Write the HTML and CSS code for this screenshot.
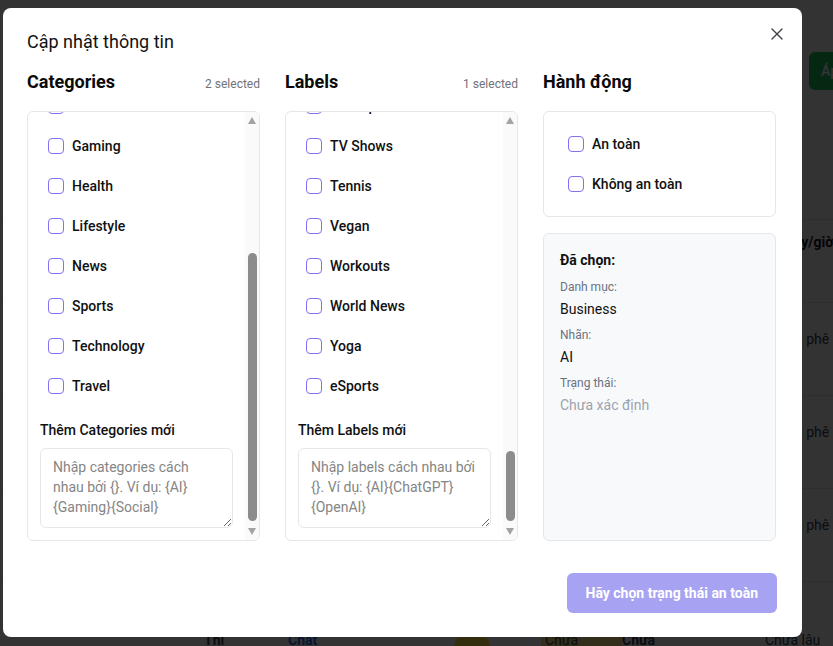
FILE: index.html
```html
<!DOCTYPE html>
<html lang="vi">
<head>
<meta charset="utf-8">
<title>Cập nhật thông tin</title>
<link rel="stylesheet" href="styles.css">
</head>
<body>
<div class="page">
  <div class="toolbar"><button class="btn-apply">Áp dụng</button></div>
  <div class="table">
    <div class="trow thead"><span class="tcell-h">Ngày/giờ</span></div>
    <div class="trow"><span class="tcell">Cà phê</span></div>
    <div class="trow"><span class="tcell">Cà phê</span></div>
    <div class="trow"><span class="tcell">Cà phê</span></div>
    <div class="trow tlast">
      <span class="bc c1">Thi</span>
      <span class="bc c2">Chat</span>
      <span class="bc c3 up">Chưa</span>
      <span class="bc c4"><i class="dot"></i></span>
      <span class="bc c5 badge">Chưa</span>
      <span class="bc c6 strong">Chưa</span>
      <span class="bc c7 up">Chưa</span>
      <span class="bc c8">Chưa lâu</span>
    </div>
  </div>
</div>

<div class="overlay">
  <div class="modal">
    <button class="close" aria-label="Đóng">
      <svg width="12" height="12" viewBox="0 0 12 12"><path d="M1 1 L11 11 M11 1 L1 11" stroke="#3f3f46" stroke-width="1.4" stroke-linecap="round" fill="none"/></svg>
    </button>
    <h2 class="title">Cập nhật thông tin</h2>

    <div class="cols">
      <section class="col">
        <div class="col-head"><h3>Categories</h3><span class="count">2 selected</span></div>
        <div class="listbox">
          <div class="scroll">
            <div class="scroll-inner">
              <ul class="items">
                <li class="item"><span class="cb"></span>Business</li>
                <li class="item"><span class="cb"></span>Education</li>
                <li class="item"><span class="cb"></span>Entertainment</li>
                <li class="item"><span class="cb"></span>Finance</li>
                <li class="item"><span class="cb"></span>Food</li>
                <li class="item"><span class="cb"></span>Gaming</li>
                <li class="item"><span class="cb"></span>Health</li>
                <li class="item"><span class="cb"></span>Lifestyle</li>
                <li class="item"><span class="cb"></span>News</li>
                <li class="item"><span class="cb"></span>Sports</li>
                <li class="item"><span class="cb"></span>Technology</li>
                <li class="item"><span class="cb"></span>Travel</li>
              </ul>
              <div class="add">
                <label class="add-label">Thêm Categories mới</label>
                <textarea class="add-input" placeholder="Nhập categories cách nhau bởi {}. Ví dụ: {AI}{Gaming}{Social}"></textarea>
              </div>
            </div>
          </div>
          <div class="sbar">
            <span class="arr-up"></span>
            <div class="track"><div class="thumb thumb-cat"></div></div>
            <span class="arr-down"></span>
          </div>
        </div>
      </section>

      <section class="col">
        <div class="col-head"><h3>Labels</h3><span class="count">1 selected</span></div>
        <div class="listbox">
          <div class="scroll">
            <div class="scroll-inner">
              <ul class="items">
                <li class="item"><span class="cb"></span>AI</li>
                <li class="item"><span class="cb"></span>ChatGPT</li>
                <li class="item"><span class="cb"></span>Music</li>
                <li class="item"><span class="cb"></span>Startups</li>
                <li class="item"><span class="cb"></span>TV Shows</li>
                <li class="item"><span class="cb"></span>Tennis</li>
                <li class="item"><span class="cb"></span>Vegan</li>
                <li class="item"><span class="cb"></span>Workouts</li>
                <li class="item"><span class="cb"></span>World News</li>
                <li class="item"><span class="cb"></span>Yoga</li>
                <li class="item"><span class="cb"></span>eSports</li>
              </ul>
              <div class="add">
                <label class="add-label">Thêm Labels mới</label>
                <textarea class="add-input" placeholder="Nhập labels cách nhau bởi {}. Ví dụ: {AI}{ChatGPT}{OpenAI}"></textarea>
              </div>
            </div>
          </div>
          <div class="sbar">
            <span class="arr-up"></span>
            <div class="track"><div class="thumb thumb-lab"></div></div>
            <span class="arr-down"></span>
          </div>
        </div>
      </section>

      <section class="col">
        <div class="col-head"><h3>Hành động</h3></div>
        <div class="actions">
          <div class="item"><span class="cb"></span>An toàn</div>
          <div class="item"><span class="cb"></span>Không an toàn</div>
        </div>
        <div class="summary">
          <div class="sum-title">Đã chọn:</div>
          <div class="sum-group">
            <div class="sum-label">Danh mục:</div>
            <div class="sum-value">Business</div>
          </div>
          <div class="sum-group">
            <div class="sum-label">Nhãn:</div>
            <div class="sum-value">AI</div>
          </div>
          <div class="sum-group">
            <div class="sum-label">Trạng thái:</div>
            <div class="sum-value muted">Chưa xác định</div>
          </div>
        </div>
      </section>
    </div>

    <div class="footer">
      <button class="submit" disabled>Hãy chọn trạng thái an toàn</button>
    </div>
  </div>
</div>
</body>
</html>
```

FILE: styles.css
```css
* { box-sizing: border-box; }
html, body { margin: 0; height: 100%; }
body {
  font-family: Roboto, "Open Sans", "Noto Sans", sans-serif;
  background: #ffffff;
  color: #111111;
  overflow: hidden;
}

/* ---------- background page ---------- */
.page { padding-top: 52px; }
.toolbar { display: flex; padding-left: 809px; height: 38px; }
.btn-apply {
  flex-shrink: 0;
  width: 120px;
  height: 38px;
  border: 0;
  border-radius: 6px;
  background: #22c55e;
  color: #ffffff;
  font: 600 14px Roboto, sans-serif;
  text-align: left;
  padding-left: 12px;
}
.table { margin-top: 129px; }
.trow {
  border-top: 1px solid #e5e7eb;
  height: 93px;
  padding-top: 26px;
  font-size: 14px;
  line-height: 20px;
  color: #374151;
  white-space: nowrap;
}
.thead { height: 83px; padding-top: 12px; }
.tcell-h { display: block; padding-left: 776px; font-weight: 700; color: #111827; }
.tcell { display: block; padding-left: 786px; }
.tlast { display: flex; padding-top: 48px; }
.bc { flex-shrink: 0; }
.c1 { margin-left: 204px; width: 84px; font-weight: 700; }
.c2 { width: 99px; color: #2563eb; font-weight: 600; }
.c3 { width: 67px; }
.c4 { width: 87px; }
.c5 { width: 81px; }
.c6 { width: 71px; font-weight: 700; }
.c7 { width: 72px; }
.up { margin-top: -8px; }
.dot { display: inline-block; width: 36px; height: 36px; border-radius: 50%; background: #fde047; }
.badge { background: #fde68a; padding: 0 4px; height: 24px; }

/* ---------- overlay + modal ---------- */
.overlay { position: fixed; inset: 0; background: rgba(0, 0, 0, 0.8); }
.modal {
  position: absolute;
  left: 3px;
  top: 8px;
  width: 799px;
  height: 629px;
  background: #ffffff;
  border-radius: 8px;
  padding: 22px 26px 24px 24px;
  display: flex;
  flex-direction: column;
}
.close {
  position: absolute;
  top: 19px;
  right: 18px;
  width: 14px;
  height: 14px;
  padding: 0;
  border: 0;
  background: transparent;
  display: flex;
  align-items: center;
  justify-content: center;
}
.title {
  margin: 0;
  font-size: 18px;
  line-height: 24px;
  font-weight: 400;
  color: #111111;
}

.cols {
  margin-top: 14px;
  display: grid;
  grid-template-columns: repeat(3, 233px);
  column-gap: 25px;
}
.col { display: flex; flex-direction: column; min-width: 0; }
.col-head {
  display: flex;
  align-items: baseline;
  justify-content: space-between;
  height: 28px;
  margin-bottom: 15px;
}
.col-head h3 {
  margin: 0;
  font-size: 18px;
  line-height: 28px;
  font-weight: 700;
  color: #0a0a0a;
}
.count { font-size: 12px; color: #71717a; }

.listbox {
  height: 430px;
  border: 1px solid #e5e7eb;
  border-radius: 6px;
  display: flex;
  overflow: hidden;
}
.scroll {
  flex: 1;
  min-width: 0;
  overflow: hidden;
  display: flex;
  flex-direction: column;
  justify-content: flex-end;
  padding: 0 12px 12px;
}
.scroll-inner { flex-shrink: 0; }
.items { list-style: none; margin: 0; padding: 0; }
.item {
  height: 40px;
  display: flex;
  align-items: center;
  gap: 8px;
  padding-left: 8px;
  font-size: 14px;
  font-weight: 500;
  color: #111111;
}
.cb {
  flex-shrink: 0;
  width: 16px;
  height: 16px;
  border: 1.5px solid #7f71f0;
  border-radius: 4px;
  background: #ffffff;
}
.add { margin-top: 14px; }
.add-label {
  display: block;
  font-size: 14px;
  line-height: 20px;
  font-weight: 500;
  color: #111111;
  margin-bottom: 8px;
}
.add-input {
  display: block;
  width: 100%;
  height: 80px;
  border: 1px solid #e5e7eb;
  border-radius: 6px;
  padding: 8px 12px;
  font: 400 14px/20px Roboto, "Open Sans", sans-serif;
  color: #111111;
  resize: vertical;
}
.add-input::placeholder { color: #858585; }

.sbar {
  width: 14px;
  flex-shrink: 0;
  background: #fafafa;
  display: flex;
  flex-direction: column;
  align-items: center;
  padding: 5px 0;
}
.arr-up, .arr-down {
  width: 0;
  height: 0;
  border-left: 4.5px solid transparent;
  border-right: 4.5px solid transparent;
}
.arr-up { border-bottom: 7px solid #a3a3a3; }
.arr-down { border-top: 7px solid #a3a3a3; }
.track {
  flex: 1;
  width: 100%;
  display: flex;
  flex-direction: column;
  justify-content: flex-end;
  align-items: center;
  padding-bottom: 7px;
}
.thumb { width: 9px; border-radius: 5px; background: #8c8c8c; }
.thumb-cat { height: 268px; }
.thumb-lab { height: 70px; }

.actions {
  border: 1px solid #e5e7eb;
  border-radius: 6px;
  padding: 12px 16px;
}
.summary {
  margin-top: 16px;
  height: 308px;
  border: 1px solid #e5e7eb;
  border-radius: 6px;
  background: #f8f9fb;
  padding: 16px;
}
.sum-title {
  font-size: 14px;
  line-height: 20px;
  font-weight: 700;
  color: #111111;
  margin-bottom: 9px;
}
.sum-group + .sum-group { margin-top: 8px; }
.sum-label { font-size: 12px; line-height: 16px; color: #6b7280; margin-bottom: 4px; }
.sum-value { font-size: 14px; line-height: 20px; color: #111111; }
.sum-value.muted { color: #9ca3af; }

.footer {
  margin-top: 32px;
  display: flex;
  justify-content: flex-end;
  margin-right: -1px;
}
.submit {
  height: 40px;
  padding: 0 19px;
  border: 0;
  border-radius: 6px;
  background: #a7a3f2;
  color: #ffffff;
  font: 700 14px Roboto, "Open Sans", sans-serif;
}
```
